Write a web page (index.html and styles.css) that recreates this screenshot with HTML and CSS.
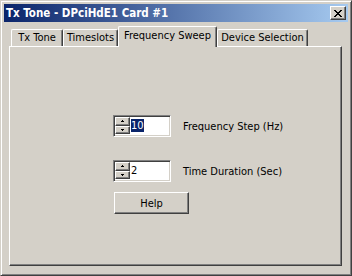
FILE: index.html
```html
<!DOCTYPE html>
<html>
<head>
<meta charset="utf-8">
<link rel="stylesheet" href="styles.css">
</head>
<body>
<div class="window">
  <div class="titlebar">
    <span class="title">Tx Tone - DPciHdE1 Card #1</span>
    <div class="close">
      <svg width="8" height="7" viewBox="0 0 8 7" shape-rendering="crispEdges">
        <rect x="0" y="0" width="2" height="1"/><rect x="6" y="0" width="2" height="1"/>
        <rect x="1" y="1" width="2" height="1"/><rect x="5" y="1" width="2" height="1"/>
        <rect x="2" y="2" width="4" height="1"/>
        <rect x="3" y="3" width="2" height="1"/>
        <rect x="2" y="4" width="4" height="1"/>
        <rect x="1" y="5" width="2" height="1"/><rect x="5" y="5" width="2" height="1"/>
        <rect x="0" y="6" width="2" height="1"/><rect x="6" y="6" width="2" height="1"/>
      </svg>
    </div>
  </div>
  <div class="body">
    <div class="tabs">
      <div class="tab t1">Tx Tone</div>
      <div class="tab t2">Timeslots</div>
      <div class="tab t3 selected">Frequency Sweep</div>
      <div class="tab t4">Device Selection</div>
    </div>
    <div class="panel">
      <div class="row">
        <div class="spin">
          <div class="updown">
            <div class="ud"><svg width="3" height="2" viewBox="0 0 3 2" shape-rendering="crispEdges"><rect x="1" y="0" width="1" height="1"/><rect x="0" y="1" width="3" height="1"/></svg></div>
            <div class="ud"><svg width="3" height="2" viewBox="0 0 3 2" shape-rendering="crispEdges"><rect x="0" y="0" width="3" height="1"/><rect x="1" y="1" width="1" height="1"/></svg></div>
          </div>
          <div class="field"><span class="sel">10</span></div>
        </div>
        <span class="label">Frequency Step (Hz)</span>
      </div>
      <div class="row row2">
        <div class="spin">
          <div class="updown">
            <div class="ud"><svg width="3" height="2" viewBox="0 0 3 2" shape-rendering="crispEdges"><rect x="1" y="0" width="1" height="1"/><rect x="0" y="1" width="3" height="1"/></svg></div>
            <div class="ud"><svg width="3" height="2" viewBox="0 0 3 2" shape-rendering="crispEdges"><rect x="0" y="0" width="3" height="1"/><rect x="1" y="1" width="1" height="1"/></svg></div>
          </div>
          <div class="field"><span class="val">2</span></div>
        </div>
        <span class="label">Time Duration (Sec)</span>
      </div>
      <div class="btn">Help</div>
    </div>
  </div>
</div>
</body>
</html>
```

FILE: styles.css
```css
* { box-sizing: border-box; }
html, body { margin: 0; padding: 0; background: #d4d0c8; }
body {
  font-family: "DejaVu Sans Condensed", "DejaVu Sans", sans-serif;
  font-size: 11px;
  color: #000;
}
.window {
  width: 352px;
  height: 276px;
  background: #d4d0c8;
  border: 1px solid;
  border-color: #d4d0c8 #404040 #404040 #d4d0c8;
  box-shadow: inset 1px 1px #fff, inset -1px -1px #808080;
  padding: 3px;
  display: flex;
  flex-direction: column;
}
.titlebar {
  height: 18px;
  background: linear-gradient(to right, #0a246a, #a6caf0);
  display: flex;
  align-items: center;
  justify-content: space-between;
  padding: 0 2px 0 2px;
}
.title {
  color: #fff;
  font-weight: bold;
  font-size: 11.5px;
  line-height: 14px;
}
.close {
  width: 16px;
  height: 14px;
  background: #d4d0c8;
  border: 1px solid;
  border-color: #fff #404040 #404040 #fff;
  box-shadow: inset -1px -1px #808080;
  display: flex;
  align-items: center;
  justify-content: center;
}
.close svg { display: block; fill: #000; }
.body {
  padding: 4px 6px 0 5px;
}
.tabs {
  display: flex;
  align-items: flex-end;
  height: 20px;
  padding-left: 2px;
}
.tab {
  height: 17px;
  border-top: 1px solid #fff;
  border-left: 1px solid #fff;
  border-right: 1px solid #404040;
  box-shadow: inset -1px 0 #808080;
  border-top-left-radius: 2px;
  border-top-right-radius: 2px;
  display: flex;
  align-items: center;
  justify-content: center;
  line-height: 13px;
  background: #d4d0c8;
  padding-bottom: 1px;
}
.t1 { width: 52px; }
.t2 { width: 55px; }
.t3 { width: 99px; }
.t4 { width: 91px; }
.tab.selected {
  height: 21px;
  margin-bottom: -1px;
  position: relative;
  z-index: 1;
  padding-bottom: 3px;
}
.panel {
  height: 220px;
  border: 1px solid;
  border-color: #fff #404040 #404040 #fff;
  box-shadow: inset -1px -1px #808080;
  padding: 68px 0 0 103px;
  display: flex;
  flex-direction: column;
  align-items: flex-start;
}
.row {
  display: flex;
  align-items: center;
  height: 22px;
}
.row2 { margin-top: 23px; }
.spin {
  width: 58px;
  height: 22px;
  border: 1px solid;
  border-color: #808080 #fff #fff #808080;
  box-shadow: inset 1px 1px #404040, inset -1px -1px #d4d0c8;
  padding: 1px 2px 2px 1px;
  display: flex;
  background: #fff;
}
.updown {
  width: 15px;
  display: flex;
  flex-direction: column;
}
.ud {
  flex: 1;
  background: #d4d0c8;
  border: 1px solid;
  border-color: #fff #404040 #404040 #fff;
  box-shadow: inset -1px -1px #808080;
  display: flex;
  align-items: center;
  justify-content: center;
}
.ud svg { display: block; fill: #000; }
.field {
  flex: 1;
  background: #fff;
  display: flex;
  align-items: center;
  padding-left: 1px;
}
.sel {
  background: #0a246a;
  color: #fff;
  line-height: 13px;
}
.val { line-height: 13px; }
.label {
  margin-left: 12px;
  line-height: 13px;
}
.btn {
  margin-top: 10px;
  margin-left: 1px;
  width: 75px;
  height: 22px;
  border: 1px solid;
  border-color: #fff #404040 #404040 #fff;
  box-shadow: inset -1px -1px #808080;
  display: flex;
  align-items: center;
  justify-content: center;
  line-height: 13px;
}
```
